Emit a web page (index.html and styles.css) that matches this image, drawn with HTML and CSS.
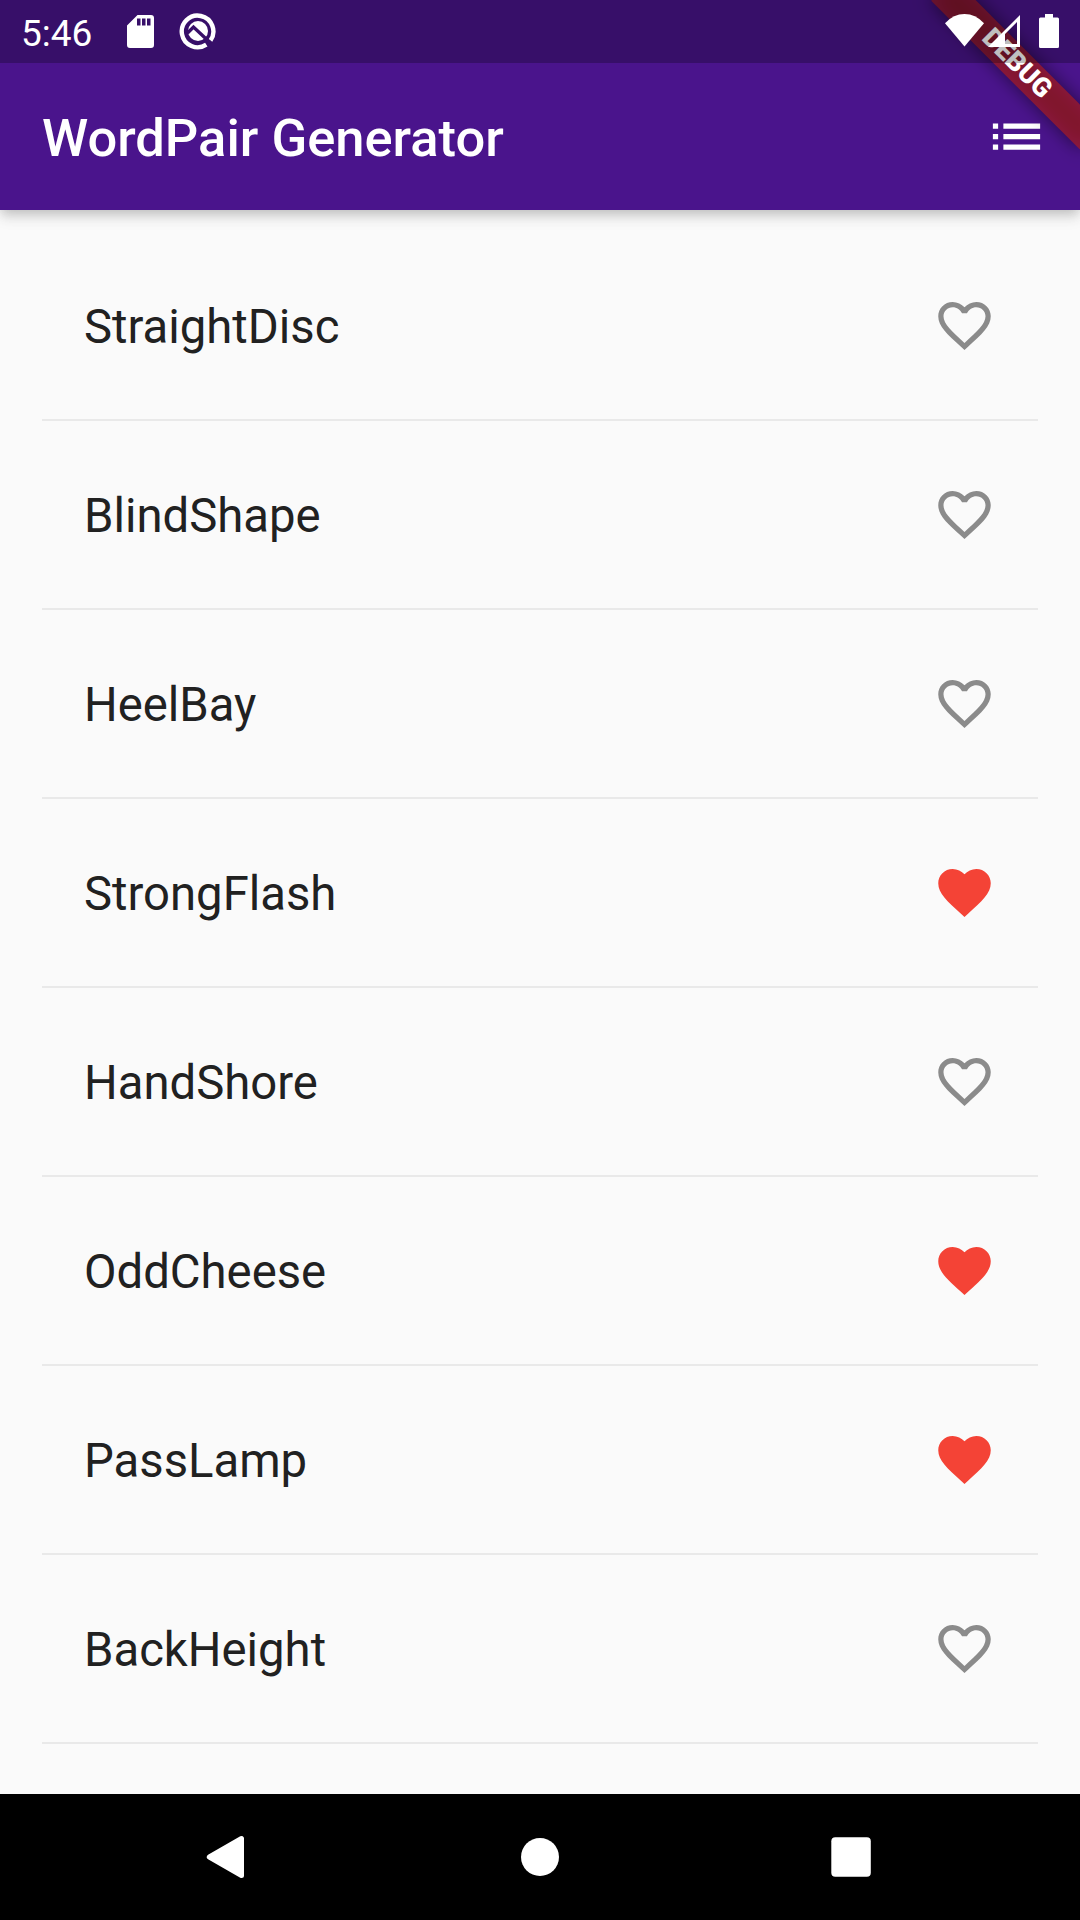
FILE: index.html
```html
<!DOCTYPE html>
<html lang="en">
<head>
<meta charset="utf-8">
<title>WordPair Generator</title>
<link rel="stylesheet" href="styles.css">
</head>
<body>
<svg class="defs" aria-hidden="true">
  <symbol id="heart" viewBox="0 0 24 24"><path d="M12 21.35l-1.45-1.32C5.4 15.36 2 12.28 2 8.5 2 5.42 4.42 3 7.5 3c1.74 0 3.41.81 4.5 2.09C13.09 3.81 14.76 3 16.5 3 19.58 3 22 5.42 22 8.5c0 3.78-3.4 6.86-8.55 11.54L12 21.35z"/></symbol>
  <symbol id="heart-outline" viewBox="0 0 24 24"><path d="M16.5 3c-1.74 0-3.41.81-4.5 2.09C10.91 3.81 9.24 3 7.5 3 4.42 3 2 5.42 2 8.5c0 3.78 3.4 6.86 8.55 11.54L12 21.35l1.45-1.32C18.6 15.36 22 12.28 22 8.5 22 5.42 19.58 3 16.5 3zm-4.4 15.55l-.1.1-.1-.1C7.14 14.24 4 11.39 4 8.5 4 6.5 5.5 5 7.5 5c1.54 0 3.04.99 3.57 2.36h1.87C13.46 5.99 14.96 5 16.5 5c2 0 3.5 1.5 3.5 3.5 0 2.89-3.14 5.74-7.9 10.05z"/></symbol>
</svg>
<div class="screen">
  <header class="header">
    <div class="status"></div>
    <div class="appbar">
      <h1 class="title">WordPair Generator</h1>
      <svg class="icon menu" viewBox="0 0 24 24"><path d="M3 13h2v-2H3v2zm0 4h2v-2H3v2zm0-8h2V7H3v2zm4 4h14v-2H7v2zm0 4h14v-2H7v2zM7 7v2h14V7H7z"/></svg>
    </div>
  </header>
  <div class="banner-clip"><div class="banner"><span>DEBUG</span></div></div>
  <div class="status-overlay">
    <span class="time">5:46</span>
    <svg class="sd" width="28" height="34" viewBox="0 0 28 34"><path fill-rule="evenodd" d="M10.500 0H24a3 3 0 0 1 3 3V30a3 3 0 0 1-3 3H3a3 3 0 0 1-3-3V10.500zM10 3.500v7h3.500v-7zM15 3.500v7h3.500v-7zM20 3.500v7h3.500v-7z"/></svg>
    <svg class="q" width="38" height="38" viewBox="0 0 38 38"><path class="ring" d="M27.300 32.600A15.800 15.800 0 1 1 31.500 28.500"/><circle cx="19" cy="19" r="10"/><path class="slash" d="M8.500 21L14.500 15L31 30.500"/></svg>
    <div class="tray">
      <svg width="40" height="33" viewBox="0 0 40 33"><path d="M0 9.200Q8.500 0 19.500 0T39 9.200L19.500 32.500z"/></svg>
      <svg class="cell" width="33" height="33" viewBox="0 0 33 33"><path fill-rule="evenodd" d="M0 32L32 0V32zM17 19V29H29V7z"/></svg>
      <svg class="battery" width="20" height="34" viewBox="0 0 20 34"><path d="M6 0h8v3.500h4.500A1.500 1.500 0 0 1 20 5v27.500a1.500 1.500 0 0 1-1.500 1.500h-17A1.500 1.500 0 0 1 0 32.500V5a1.500 1.500 0 0 1 1.500-1.500H6z"/></svg>
    </div>
  </div>
  <ul class="list">
    <li class="tile"><span>StraightDisc</span><svg class="icon"><use href="#heart-outline"/></svg></li>
    <li class="tile"><span>BlindShape</span><svg class="icon"><use href="#heart-outline"/></svg></li>
    <li class="tile"><span>HeelBay</span><svg class="icon"><use href="#heart-outline"/></svg></li>
    <li class="tile"><span>StrongFlash</span><svg class="icon saved"><use href="#heart"/></svg></li>
    <li class="tile"><span>HandShore</span><svg class="icon"><use href="#heart-outline"/></svg></li>
    <li class="tile"><span>OddCheese</span><svg class="icon saved"><use href="#heart"/></svg></li>
    <li class="tile"><span>PassLamp</span><svg class="icon saved"><use href="#heart"/></svg></li>
    <li class="tile"><span>BackHeight</span><svg class="icon"><use href="#heart-outline"/></svg></li>
  </ul>
  <nav class="nav">
    <svg width="126" height="126" viewBox="0 0 126 126"><path class="back" d="M43.300 63L75.500 44.500V81.500z"/></svg>
    <svg width="126" height="126" viewBox="0 0 126 126"><circle cx="63" cy="63" r="19"/></svg>
    <svg width="126" height="126" viewBox="0 0 126 126"><rect x="43.300" y="43.300" width="39.500" height="39.500" rx="4"/></svg>
  </nav>
</div>
</body>
</html>
```
FILE: styles.css
```css
* { box-sizing: border-box; }
body { margin: 0; font-family: Roboto, sans-serif; }
.defs { position: absolute; width: 0; height: 0; }
.screen {
  position: relative;
  display: flex;
  flex-direction: column;
  width: 1080px;
  height: 1920px;
  overflow: hidden;
  background: #fafafa;
}
.header {
  flex: none;
  background: #4a148c;
  box-shadow: 0 5px 10px -2px rgba(0, 0, 0, .15), 0 9px 13px rgba(0, 0, 0, .07), 0 3px 18px rgba(0, 0, 0, .06);
}
.status { height: 63px; }
.appbar {
  display: flex;
  align-items: center;
  justify-content: space-between;
  height: 147px;
  padding: 0 32px 0 42px;
}
.title { margin: 0; padding-top: 2px; color: #fff; font-size: 52.5px; font-weight: 500; line-height: 62px; }
.icon { display: block; flex: none; width: 63px; height: 63px; fill: #8b8b8b; }
.icon.menu { fill: #fff; }
.icon.saved { fill: #f44336; }

/* Debug ribbon across the top right corner */
.banner-clip { position: absolute; top: 0; right: 0; width: 210px; height: 210px; overflow: hidden; }
.banner {
  position: absolute;
  top: 73.5px;
  left: 105px;
  width: 210px;
  height: 31.5px;
  display: flex;
  align-items: center;
  justify-content: center;
  transform: rotate(45deg);
  transform-origin: 105px -73.5px;
  color: #fff;
  font-size: 26.8px;
  font-weight: 900;
  line-height: 1;
}
.banner::before, .banner::after { content: ""; position: absolute; inset: 0; }
.banner::before { background: rgba(0, 0, 0, .5); filter: blur(9px); }
.banner::after { background: rgba(183, 28, 28, .627); }
.banner span { position: relative; z-index: 1; }

.status-overlay {
  position: absolute;
  top: 0;
  left: 0;
  width: 1080px;
  height: 63px;
  display: flex;
  align-items: flex-start;
  padding-left: 21px;
  background: rgba(0, 0, 0, .25);
  color: #fff;
  fill: #fff;
}
.time { width: 106px; padding-top: 12px; font-size: 37px; line-height: 44px; }
.sd { margin-top: 15px; }
.q { margin: 12px 0 0 24px; }
.ring { fill: none; stroke: #fff; stroke-width: 4.4; }
.slash { fill: none; stroke: #380f69; stroke-width: 3.4; }
.tray { display: flex; margin: 14px 21px 0 auto; }
.cell { margin: 1px 0 0 3px; }
.battery { margin-left: 18px; }

.list { flex: 1; min-height: 0; margin: 0; padding: 42px 42px 0; list-style: none; }
.tile {
  display: flex;
  align-items: center;
  justify-content: space-between;
  height: 189px;
  padding: 0 42px 42px;
  color: #212121;
  font-size: 47.25px;
  background: linear-gradient(#e9e9e9, #e9e9e9) 0 167px / 100% 2px no-repeat;
}
.tile span { padding-top: 2px; }
.nav {
  position: relative;
  flex: none;
  display: flex;
  justify-content: center;
  gap: 185px;
  height: 126px;
  background: #000;
  fill: #fff;
}
.back { stroke: #fff; stroke-width: 5; stroke-linejoin: round; }
```
